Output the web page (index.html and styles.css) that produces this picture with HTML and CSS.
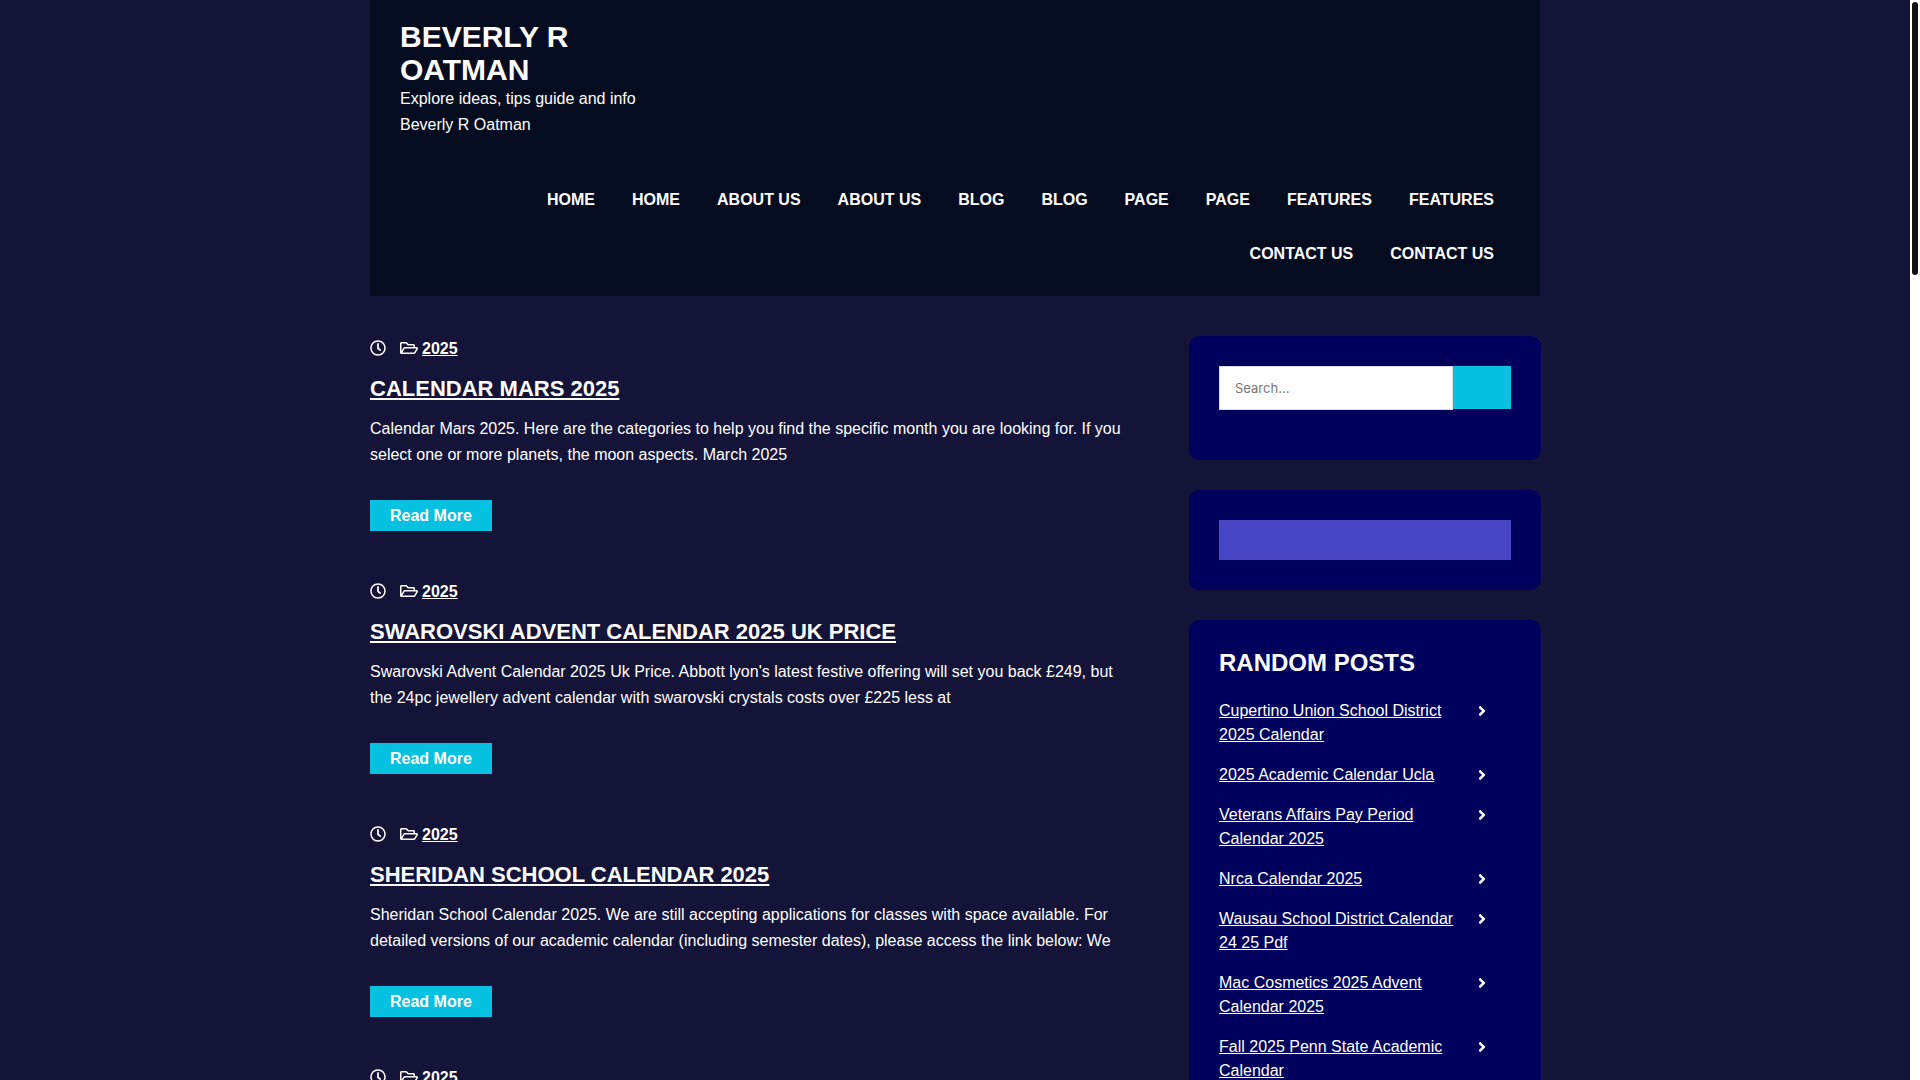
FILE: index.html
```html
<!DOCTYPE html>
<html lang="en">
<head>
<meta charset="utf-8">
<meta name="viewport" content="width=device-width, initial-scale=1">
<title>Beverly R Oatman</title>
<link rel="stylesheet" href="styles.css">
</head>
<body>
<svg class="sprite" aria-hidden="true">
  <symbol id="clock" viewBox="0 0 512 512"><path d="M256 8C119 8 8 119 8 256s111 248 248 248 248-111 248-248S393 8 256 8zm0 448c-110.500 0-200-89.500-200-200S145.500 56 256 56s200 89.500 200 200-89.500 200-200 200zm61.800-104.400l-84.900-61.700c-3.100-2.300-4.900-5.900-4.900-9.700V116c0-6.600 5.400-12 12-12h32c6.600 0 12 5.400 12 12v141.700l66.800 48.600c5.400 3.900 6.500 11.400 2.600 16.800L334.600 349c-3.900 5.300-11.400 6.500-16.800 2.600z"/></symbol>
  <symbol id="folder" viewBox="0 0 576 512"><path d="M527.900 224H480v-48c0-26.500-21.500-48-48-48H272l-64-64H48C21.500 64 0 85.500 0 112v288c0 26.500 21.500 48 48 48h400c16.500 0 31.900-8.500 40.700-22.600l79.900-128c20-31.900-3-73.400-40.700-73.400zM48 118c0-3.300 2.700-6 6-6h134.100l64 64H426c3.300 0 6 2.700 6 6v42H152c-16.800 0-32.400 8.800-41.100 23.200L48 351.400zm400 282H72l77.200-128H528z"/></symbol>
  <symbol id="angle" viewBox="0 0 256 512"><path d="M224.300 273l-136 136c-9.400 9.400-24.600 9.400-33.900 0l-22.600-22.600c-9.400-9.400-9.400-24.600 0-33.900l96.400-96.400-96.400-96.400c-9.400-9.400-9.400-24.600 0-33.900L54.300 103c9.400-9.400 24.600-9.400 33.900 0l136 136c9.500 9.400 9.500 24.600.1 34z"/></symbol>
</svg>
<header class="site-header container">
  <div class="brand">
    <h1 class="brand-title"><a href="#">Beverly R Oatman</a></h1>
    <p class="tagline">Explore ideas, tips guide and info Beverly R Oatman</p>
  </div>
  <nav class="nav" aria-label="Main">
    <a href="#">Home</a>
    <a href="#">Home</a>
    <a href="#">About Us</a>
    <a href="#">About Us</a>
    <a href="#">Blog</a>
    <a href="#">Blog</a>
    <a href="#">Page</a>
    <a href="#">Page</a>
    <a href="#">Features</a>
    <a href="#">Features</a>
    <a href="#">Contact Us</a>
    <a href="#">Contact Us</a>
  </nav>
</header>
<div class="content container">
  <main class="posts">
    <article class="post">
      <div class="meta"><svg class="icon-clock"><use href="#clock"/></svg><svg class="icon-folder"><use href="#folder"/></svg><a href="#">2025</a></div>
      <h2 class="post-title"><a href="#">Calendar Mars 2025</a></h2>
      <p class="excerpt">Calendar Mars 2025. Here are the categories to help you find the specific month you are looking for. If you select one or more planets, the moon aspects. March 2025</p>
      <a class="read-more" href="#">Read More</a>
    </article>
    <article class="post">
      <div class="meta"><svg class="icon-clock"><use href="#clock"/></svg><svg class="icon-folder"><use href="#folder"/></svg><a href="#">2025</a></div>
      <h2 class="post-title"><a href="#">Swarovski Advent Calendar 2025 Uk Price</a></h2>
      <p class="excerpt">Swarovski Advent Calendar 2025 Uk Price. Abbott lyon's latest festive offering will set you back £249, but the 24pc jewellery advent calendar with swarovski crystals costs over £225 less at</p>
      <a class="read-more" href="#">Read More</a>
    </article>
    <article class="post">
      <div class="meta"><svg class="icon-clock"><use href="#clock"/></svg><svg class="icon-folder"><use href="#folder"/></svg><a href="#">2025</a></div>
      <h2 class="post-title"><a href="#">Sheridan School Calendar 2025</a></h2>
      <p class="excerpt">Sheridan School Calendar 2025. We are still accepting applications for classes with space available. For detailed versions of our academic calendar (including semester dates), please access the link below: We</p>
      <a class="read-more" href="#">Read More</a>
    </article>
    <article class="post">
      <div class="meta"><svg class="icon-clock"><use href="#clock"/></svg><svg class="icon-folder"><use href="#folder"/></svg><a href="#">2025</a></div>
    </article>
  </main>
  <aside class="sidebar">
    <section class="card">
      <form class="search">
        <input class="search-field" type="search" placeholder="Search..." aria-label="Search">
        <button class="search-button" type="submit" aria-label="Submit search"></button>
      </form>
    </section>
    <section class="card"><div class="banner"></div></section>
    <section class="card">
      <h2 class="card-title">Random Posts</h2>
      <ul class="links">
        <li><a href="#">Cupertino Union School District 2025 Calendar</a><svg class="icon-angle"><use href="#angle"/></svg></li>
        <li><a href="#">2025 Academic Calendar Ucla</a><svg class="icon-angle"><use href="#angle"/></svg></li>
        <li><a href="#">Veterans Affairs Pay Period Calendar 2025</a><svg class="icon-angle"><use href="#angle"/></svg></li>
        <li><a href="#">Nrca Calendar 2025</a><svg class="icon-angle"><use href="#angle"/></svg></li>
        <li><a href="#">Wausau School District Calendar 24 25 Pdf</a><svg class="icon-angle"><use href="#angle"/></svg></li>
        <li><a href="#">Mac Cosmetics 2025 Advent Calendar 2025</a><svg class="icon-angle"><use href="#angle"/></svg></li>
        <li><a href="#">Fall 2025 Penn State Academic Calendar</a><svg class="icon-angle"><use href="#angle"/></svg></li>
      </ul>
    </section>
  </aside>
</div>
<div class="scrollbar" aria-hidden="true"><div class="scrollbar-thumb"></div></div>
</body>
</html>
```
FILE: styles.css
```css
* {
  box-sizing: border-box;
}

body {
  margin: 0;
  padding-right: 10px;
  height: 100vh;
  overflow: hidden;
  background: #141338;
  color: #fff;
  font-family: "Liberation Sans", Arial, sans-serif;
  font-size: 16px;
  line-height: 26px;
}

h1,
h2,
p,
ul {
  margin: 0;
  padding: 0;
}

a {
  color: inherit;
}

svg {
  display: block;
  flex: none;
  height: 16px;
  fill: currentColor;
}

.sprite {
  display: none;
}

.container {
  max-width: 1170px;
  margin: 0 auto;
}

.site-header {
  padding: 20px 30px 15px;
  background: #060c20;
}

.brand {
  max-width: 248px;
}

.brand-title {
  font-size: 30px;
  line-height: 33px;
  text-transform: uppercase;
}

.brand-title a {
  text-decoration: none;
}

.nav {
  display: flex;
  flex-wrap: wrap;
  justify-content: flex-end;
  column-gap: 5px;
  margin-top: 35px;
  padding-left: 60px;
}

.nav a {
  padding: 0 16px;
  font-weight: bold;
  line-height: 54px;
  text-decoration: none;
  text-transform: uppercase;
}

.content {
  display: flex;
  justify-content: space-between;
  align-items: flex-start;
  padding-top: 40px;
}

.posts {
  width: 65%;
}

.post {
  margin-bottom: 48px;
}

.meta {
  display: flex;
  align-items: flex-start;
  font-weight: bold;
}

.icon-clock {
  width: 16px;
  margin: 4px 14px 0 0;
}

.icon-folder {
  width: 18px;
  margin: 4px 4px 0 0;
}

.post-title {
  margin: 15px 0;
  font-size: 22px;
  line-height: 24px;
  text-transform: uppercase;
}

.excerpt {
  margin-bottom: 32px;
}

.read-more {
  display: block;
  width: fit-content;
  padding: 0 20px;
  background: #06c1df;
  font-weight: bold;
  line-height: 31px;
  text-decoration: none;
}

.sidebar {
  display: grid;
  gap: 30px;
  width: 30%;
}

.card {
  padding: 30px;
  border-radius: 10px;
  background: #00005c;
}

.search {
  display: flex;
  align-items: flex-start;
  margin-bottom: 20px;
}

.search-field {
  flex: 1;
  min-width: 0;
  height: 44px;
  padding: 0 15px;
  border: 1px solid #ddd;
  border-radius: 0;
  background: #fff;
  font-family: Inter, sans-serif;
  font-size: 13px;
  appearance: none;
}

.search-button {
  width: 58px;
  height: 43px;
  border: 0;
  background: #06c1df;
}

.banner {
  height: 40px;
  background: #4946c6;
}

.card-title {
  margin-bottom: 23px;
  font-size: 24px;
  line-height: 26px;
  text-transform: uppercase;
}

.links {
  display: grid;
  gap: 16px;
  padding-right: 25px;
  line-height: 24px;
  list-style: none;
}

.links li {
  display: flex;
  justify-content: space-between;
  gap: 10px;
}

.icon-angle {
  width: 8px;
  margin-top: 4px;
}

.scrollbar {
  position: fixed;
  top: 0;
  right: 0;
  bottom: 0;
  width: 10px;
  padding: 2px;
  background: #fff;
}

.scrollbar-thumb {
  height: 273px;
  border-radius: 3px;
  background: #111;
}
```
